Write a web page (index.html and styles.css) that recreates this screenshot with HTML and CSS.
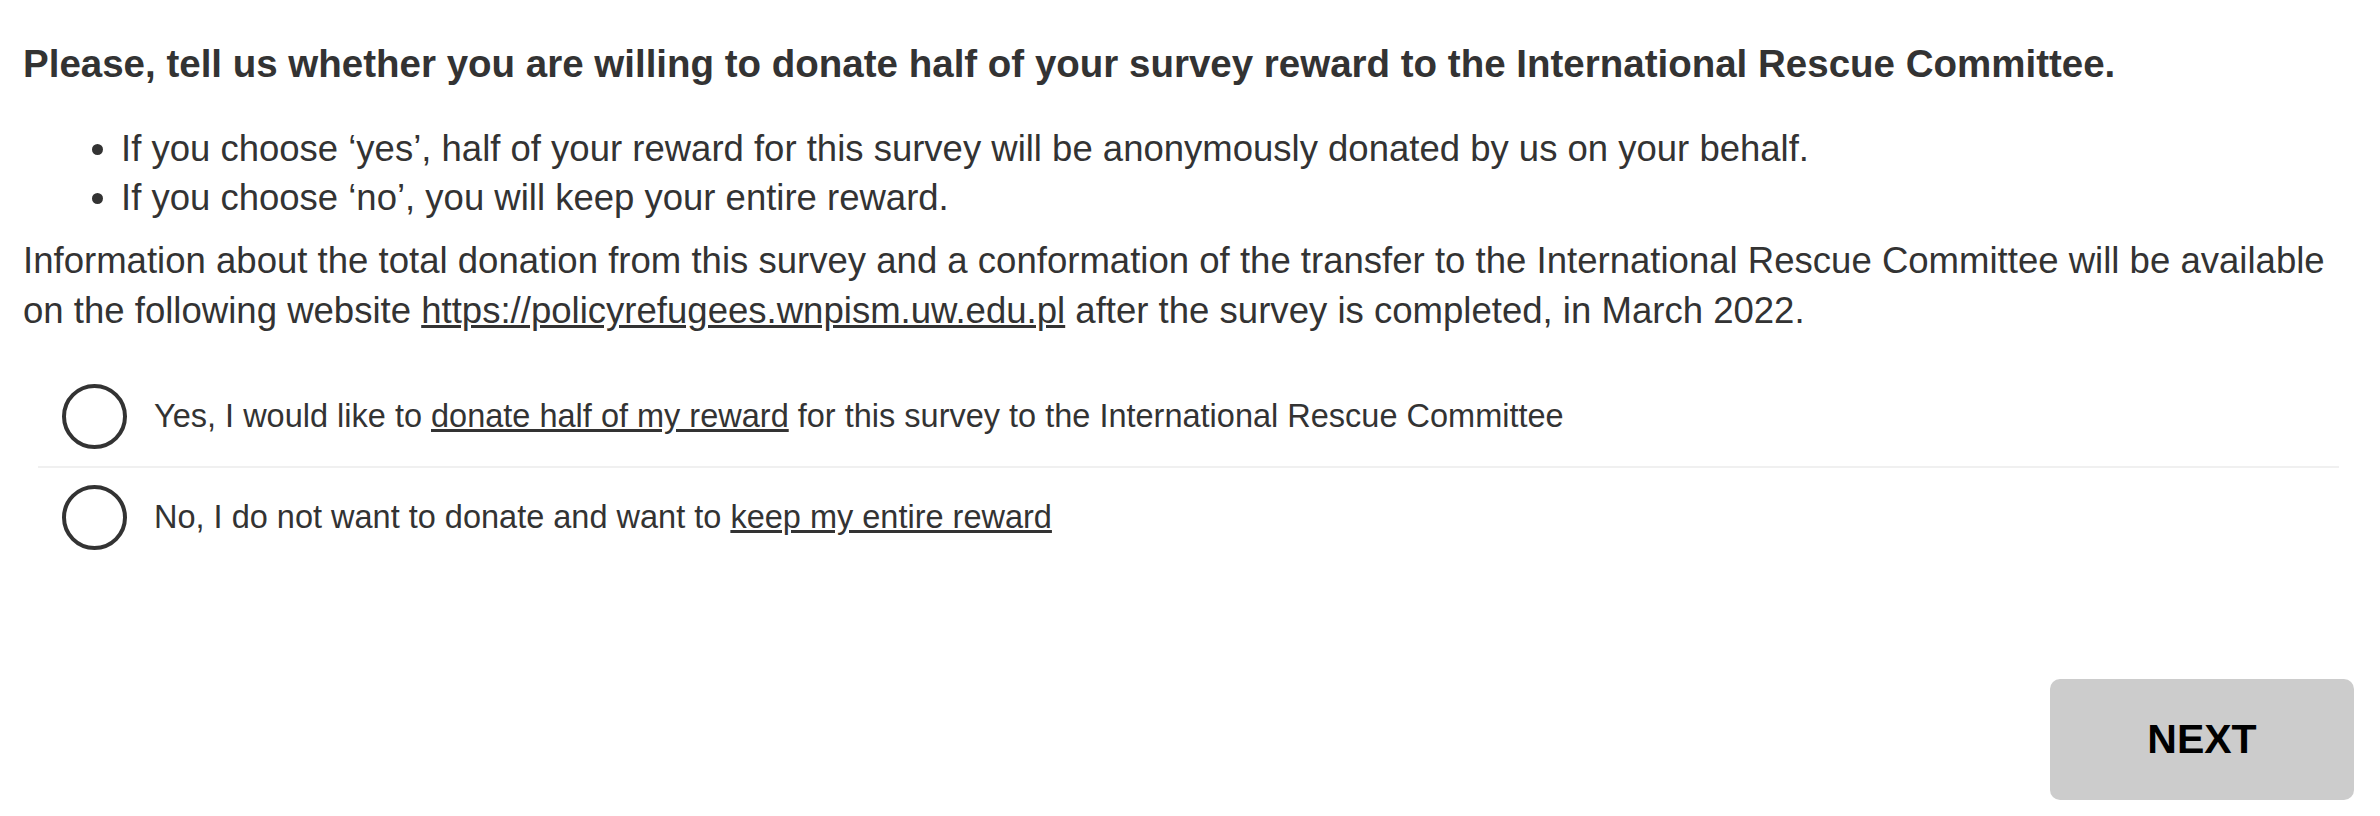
FILE: index.html
```html
<!DOCTYPE html>
<html lang="en">
<head>
<meta charset="utf-8">
<title>Donation question</title>
<link rel="stylesheet" href="styles.css">
</head>
<body>
<main class="page">
  <h1 class="question">Please, tell us whether you are willing to donate half of your survey reward to the International Rescue Committee.</h1>
  <ul class="bullets">
    <li>If you choose ‘yes’, half of your reward for this survey will be anonymously donated by us on your behalf.</li>
    <li>If you choose ‘no’, you will keep your entire reward.</li>
  </ul>
  <p class="info">Information about the total donation from this survey and a conformation of the transfer to the International Rescue Committee will be available on the following website <a class="link" href="#">https://policyrefugees.wnpism.uw.edu.pl</a> after the survey is completed, in March 2022.</p>
  <div class="choices">
    <label class="choice">
      <span class="radio"></span>
      <span class="choice-text">Yes, I would like to <u>donate half of my reward</u> for this survey to the International Rescue Committee</span>
    </label>
    <label class="choice">
      <span class="radio"></span>
      <span class="choice-text">No, I do not want to donate and want to <u>keep my entire reward</u></span>
    </label>
  </div>
  <div class="actions">
    <button class="next" type="button">NEXT</button>
  </div>
</main>
</body>
</html>
```
FILE: styles.css
```css
html, body {
  margin: 0;
  padding: 0;
  background: #fff;
}

body {
  font-family: "Liberation Sans", Arial, Helvetica, sans-serif;
  color: #333;
}

.page {
  padding: 40px 26px 0 23px;
}

.question {
  margin: 0;
  font-size: 38.5px;
  font-weight: bold;
  line-height: 48px;
  color: #333;
}

.bullets {
  margin: 36px 0 0 0;
  padding-left: 98px;
  font-size: 36.5px;
  line-height: 49px;
}

.info {
  margin: 14px 0 0 0;
  font-size: 36.55px;
  line-height: 50px;
}

.link {
  color: #333;
  text-decoration: underline;
}

.choices {
  margin: 31px 15px 0 15px;
}

.choice {
  display: flex;
  align-items: center;
  height: 99px;
  padding-left: 24px;
  gap: 27px;
  font-size: 32.5px;
  color: #333;
}

.choice + .choice {
  border-top: 2px solid #f0f0f0;
}

.radio {
  flex: none;
  width: 57px;
  height: 57px;
  border: 4px solid #333;
  border-radius: 50%;
}

.choice-text u {
  text-decoration: underline;
}

.actions {
  display: flex;
  justify-content: flex-end;
  margin-top: 112px;
}

.next {
  width: 304px;
  height: 121px;
  border: none;
  border-radius: 10px;
  background: #ccc;
  color: #000;
  font-family: "Liberation Sans", Arial, Helvetica, sans-serif;
  font-size: 41px;
  font-weight: bold;
  padding: 0;
}
```
